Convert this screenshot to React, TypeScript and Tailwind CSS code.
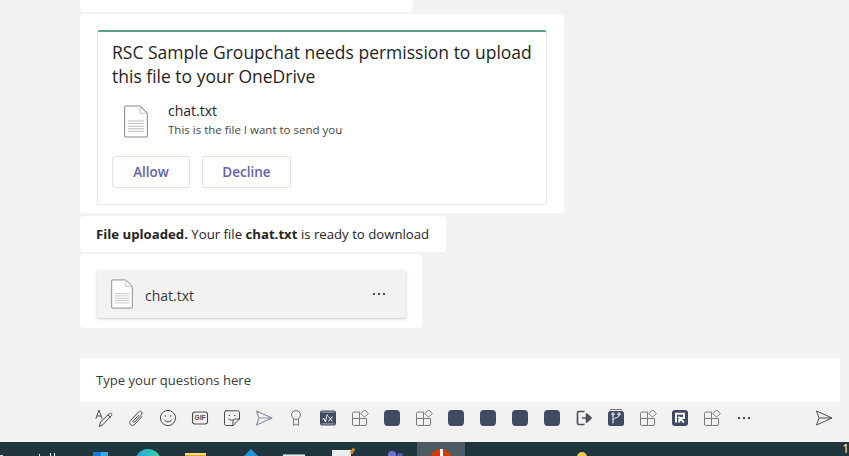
import React from "react";

const F = { fontFamily: '"Open Sans", "Noto Sans", sans-serif' };

function FileIcon({ w, h, stroke = "#8a8886", band = false }: { w: number; h: number; stroke?: string; band?: boolean }) {
  return (
    <svg width={w} height={h} viewBox="0 0 24 32" fill="none">
      <path d="M1 2 a1 1 0 0 1 1-1 H16 L23 8 V30 a1 1 0 0 1-1 1 H2 a1 1 0 0 1-1-1 Z" fill="#fff" stroke={stroke} strokeWidth="1" />
      <path d="M16 1 V8 H23" fill="none" stroke="#c8c6c4" strokeWidth="1" />
      <path d="M4 15.5H20M4 18H20M4 20.5H20M4 23H20M4 25.5H20" stroke={band ? "#bdbbb9" : "#c8c6c4"} strokeWidth="1" />
    </svg>
  );
}

const S = "#4a4a4a";
const Wrap = ({ children }: { children: React.ReactNode }) => (
  <svg width="20" height="20" viewBox="0 0 20 20" fill="none" stroke={S} strokeWidth="1" strokeLinecap="round" strokeLinejoin="round">
    {children}
  </svg>
);

const Format = () => (
  <Wrap>
    <path d="M2 10.5 L5 2 L8 10.5 M3 8H7" stroke="#555" />
    <path d="M5.5 18 L6.5 14 L15.5 5.5 C16.8 4.5 18.6 6.2 17.5 7.5 L9 16.5 Z" />
    <path d="M14 7 L16.5 9.5" />
  </Wrap>
);
const Clip = () => (
  <Wrap>
    <path d="M16 8.5 L8.5 16.5 C6 19 2 15.5 4.5 12.5 L12.5 4 C14.3 2 17.4 4.6 15.5 6.8 L8.6 14 C7.6 15 6.4 13.8 7.3 12.7 L12.5 7.2" />
  </Wrap>
);
const Smile = () => (
  <Wrap>
    <circle cx="10" cy="10" r="7.6" />
    <circle cx="7.4" cy="8" r="0.8" fill={S} stroke="none" />
    <circle cx="12.6" cy="8" r="0.8" fill={S} stroke="none" />
    <path d="M6.5 12 C8 14.5 12 14.5 13.5 12" />
  </Wrap>
);
const Gif = () => (
  <svg width="20" height="20" viewBox="0 0 20 20" fill="none">
    <rect x="2.5" y="4" width="15" height="12" rx="2.5" stroke={S} strokeWidth="1.1" />
    <text x="10" y="12.4" textAnchor="middle" fontSize="6.5" fontWeight="700" fill={S} fontFamily="Liberation Sans, sans-serif">GIF</text>
  </svg>
);
const Sticker = () => (
  <Wrap>
    <path d="M4 2.8 H15.5 A2 2 0 0 1 17.5 4.8 V11 L11 17.5 H4.5 A2 2 0 0 1 2.5 15.5 V4.3 A1.5 1.5 0 0 1 4 2.8 Z" />
    <path d="M17.5 11 H13 A2 2 0 0 0 11 13 V17.5" />
    <circle cx="7.4" cy="7.5" r="0.7" fill={S} stroke="none" />
    <circle cx="12.6" cy="7.5" r="0.7" fill={S} stroke="none" />
    <path d="M6.5 11 C7.5 12.2 9 12.4 10.5 12" />
  </Wrap>
);
const Meet = () => (
  <svg width="20" height="20" viewBox="0 0 20 20" fill="none" stroke="#8a93a3" strokeWidth="1.1" strokeLinejoin="round">
    <path d="M2.5 3 L18 10 L2.5 17 L5 10 Z M5 10 H18" />
  </svg>
);
const Praise = () => (
  <svg width="20" height="20" viewBox="0 0 20 20" fill="none" stroke="#6b7686" strokeWidth="1" strokeLinejoin="round">
    <circle cx="10" cy="7" r="4.4" />
    <path d="M7.5 11 V17.5 L10 16 L12.5 17.5 V11" />
  </svg>
);
const Sqrt = () => (
  <svg width="20" height="20" viewBox="0 0 20 20">
    <rect x="2" y="2.5" width="16" height="15" rx="2" fill="#3f4a63" />
    <rect x="3.5" y="3.5" width="13" height="1.2" fill="#9aa2b4" />
    <rect x="3.5" y="15.3" width="13" height="1.2" fill="#9aa2b4" />
    <path d="M4.5 11 L6 10.5 L7.5 14 L9 7 H10" fill="none" stroke="#fff" strokeWidth="1" />
    <path d="M10.5 8.5 L14.5 13.5 M14.5 8.5 L10.5 13.5" stroke="#fff" strokeWidth="1" />
  </svg>
);
const Apps = () => (
  <svg width="20" height="20" viewBox="0 0 20 20" fill="none" stroke="#7a7a7a" strokeWidth="1" strokeLinejoin="round">
    <path d="M9.5 4 H4 A1.5 1.5 0 0 0 2.5 5.5 V16 A1.5 1.5 0 0 0 4 17.5 H15 A1.5 1.5 0 0 0 16.5 16 V10.5 H9.5 Z M9.5 10.5 H2.5 M9.5 10.5 V17.5" />
    <path d="M14.5 1.8 L18.2 5.5 L14.5 9.2 L10.8 5.5 Z" />
  </svg>
);
const Block = () => <div className="h-4 w-4 rounded-[4px] bg-[#3f4a63]" />;
const Share = () => (
  <svg width="20" height="20" viewBox="0 0 20 20" fill="none">
    <path d="M10.5 3.5 H5 A1.5 1.5 0 0 0 3.5 5 V15 A1.5 1.5 0 0 0 5 16.5 H10.5" stroke="#4a4f5a" strokeWidth="1.7" />
    <path d="M8 10 H13 M12.5 6 L17 10 L12.5 14 Z" stroke="#4a4f5a" strokeWidth="1.7" fill="#4a4f5a" strokeLinejoin="round" />
  </svg>
);
const Branch = () => (
  <svg width="20" height="20" viewBox="0 0 20 20" fill="none">
    <rect x="2" y="3" width="16" height="15" rx="2.5" fill="#3f4a63" />
    <rect x="4" y="1" width="12" height="1" fill="#777" />
    <g stroke="#fff" strokeWidth="1">
      <circle cx="7" cy="6" r="1.2" />
      <circle cx="13" cy="6" r="1.2" />
      <path d="M7 7.2 V15.5 M13 7.2 C13 10 8 9.5 7 12" />
    </g>
  </svg>
);
const RLogo = () => (
  <svg width="20" height="20" viewBox="0 0 20 20" fill="none">
    <rect x="2" y="2" width="16" height="16" rx="3" fill="#3f4a63" />
    <path d="M6 14.5 V5.8 H14 V10 H9.5 L14 14.5 M9.2 8.6 V14.5" stroke="#fff" strokeWidth="1.9" />
  </svg>
);
const More = () => (
  <svg width="20" height="20" viewBox="0 0 20 20" fill="#252423">
    <circle cx="5" cy="10" r="1.1" />
    <circle cx="10" cy="10" r="1.1" />
    <circle cx="15" cy="10" r="1.1" />
  </svg>
);
const Send = () => (
  <svg width="20" height="20" viewBox="0 0 20 20" fill="none" stroke="#4f4f4f" strokeWidth="1" strokeLinejoin="round">
    <path d="M2.5 3 L18 10 L2.5 17 L5 10 Z M5 10 H18" />
  </svg>
);

const tools = [
  <Format />, <Clip />, <Smile />, <Gif />, <Sticker />, <Meet />, <Praise />, <Sqrt />, <Apps />, <Block />, <Apps />,
  <Block />, <Block />, <Block />, <Block />, <Share />, <Branch />, <Apps />, <RLogo />, <Apps />, <More />,
];

function Taskbar() {
  return (
    <div className="flex h-[14px] items-start overflow-hidden bg-[#20363f]">
      <div className="mt-[13px] h-1 w-[3px] bg-[#d8d8d8]" />
      <div className="ml-[36px] mt-[12px] h-1 w-px bg-white" />
      <div className="ml-[10px] mt-[11px] h-1 w-px bg-white" />
      <div className="ml-[3px] mt-[11px] h-1 w-px bg-white" />
      <div className="ml-[38px] mt-[10px] flex h-4 w-[15px]">
        <div className="w-[8px] bg-[#1678d2]" />
        <div className="w-[7px] bg-[#38a8ee]" />
      </div>
      <div className="ml-[27px] mt-[7px] h-[26px] w-[26px] rounded-full bg-gradient-to-r from-[#2b9fd6] to-[#3fd6a0]" />
      <div className="ml-[24px] mt-[11px] h-4 w-[21px] border-t-2 border-t-[#f5dc8c] bg-[#e3a51a]" />
      <svg className="ml-[37px] mt-[7px]" width="16" height="16" viewBox="0 0 16 16"><path d="M8 0 L16 8 L8 16 L0 8 Z" fill="#1c97dc" /></svg>
      <div className="ml-[24px] mt-[12px] h-4 w-[22px] border-t border-t-[#8f9aa0] bg-[#e6e9eb]" />
      <div className="ml-[27px] mt-[8px] h-4 w-[19px] bg-[#e8edf0]" />
      <div className="mt-[6px] h-[6px] w-[3px] rotate-[30deg] bg-[#d9822b]" />
      <div className="ml-[34px] mt-[9px] flex items-start gap-[1px]">
        <div className="h-2 w-2 rounded-full bg-[#6f6fd6]" />
        <div className="mt-[2px] h-[6px] w-[6px] rounded-full bg-[#5558b8]" />
      </div>
      <div className="ml-[14px] flex h-[14px] w-[48px] justify-center bg-[#4d5a62] pt-[7px]">
        <div className="flex h-6 w-[22px] justify-center rounded-full bg-[#d83b01]">
          <div className="h-3 w-[3px] bg-white" />
        </div>
      </div>
      <div className="ml-[112px] mt-[10px] h-3 w-[10px] rounded-full bg-[#f2c94c]" />
      <span className="ml-auto text-[12px] leading-[14px] text-white" style={F}>1</span>
    </div>
  );
}

export default function App() {
  return (
    <div className="flex h-[456px] w-[849px] flex-col overflow-hidden bg-[#f3f2f1] text-[#252423]" style={F}>
      <div className="flex flex-1 flex-col items-start pl-[80px]">
        <div className="h-3 w-[333px] rounded-b bg-white" />
        <div className="mt-[2px] w-[484px] rounded bg-white p-[16px] pb-[8px] pl-[17px] pr-[17px]">
          <div className="h-[175px] rounded-[3px] border border-[#e9e8e7] border-t-2 border-t-[#5c9f8a] pl-[14px] pr-[8px] pt-[8px]">
            <p className="text-[17.5px] font-medium leading-[24px] text-[#252423]">
              RSC Sample Groupchat needs permission to upload this file to your OneDrive
            </p>
            <div className="mt-[15px] flex items-start pl-[11px]">
              <div className="mt-[2px]"><FileIcon w={26} h={33} band /></div>
              <div className="ml-[19px]">
                <div className="-mt-[1px] text-[14px] leading-[18px] text-[#252423]">chat.txt</div>
                <div className="mt-[2px] text-[11.5px] leading-[16px] text-[#484644]">This is the file I want to send you</div>
              </div>
            </div>
            <div className="mt-[18px] flex gap-[12px]">
              <button className="h-[32px] w-[78px] rounded-[3px] border border-[#e1dff5] text-[13.5px] font-semibold text-[#6264a7]">Allow</button>
              <button className="h-[32px] w-[89px] rounded-[3px] border border-[#e1dff5] text-[13.5px] font-semibold text-[#6264a7]">Decline</button>
            </div>
          </div>
        </div>
        <div className="mt-[3px] flex h-[36px] w-[366px] items-center rounded bg-white pl-[16px] pt-[2px] text-[13.2px] text-[#252423]">
          <span><b>File uploaded.</b> Your file <b>chat.txt</b> is ready to download</span>
        </div>
        <div className="mt-[2px] h-[74px] w-[342px] rounded bg-white px-[17px] pt-[16px]">
          <div className="flex h-[48px] w-[309px] items-center rounded-[3px] bg-[#f3f2f1] pl-[13px] pr-[17px] shadow-[0_1px_3px_rgba(0,0,0,0.22)]">
            <FileIcon w={24} h={30} />
            <span className="ml-[11px] flex-1 pt-[2px] text-[14px] text-[#3b3a39]">chat.txt</span>
            <div className="-mt-[1px]"><More /></div>
          </div>
        </div>
      </div>
      <div className="ml-[80px] flex h-[44px] w-[760px] items-center bg-white pl-[16px] pt-[2px] text-[13.1px] text-[#3b3a39]">
        Type your questions here
      </div>
      <div className="flex h-[40px] items-center pb-[8px] pl-[88px] pr-[15px]">
        {tools.map((t, i) => (
          <div key={i} className="flex h-8 w-8 items-center justify-center">{t}</div>
        ))}
        <div className="ml-auto"><Send /></div>
      </div>
      <Taskbar />
    </div>
  );
}
